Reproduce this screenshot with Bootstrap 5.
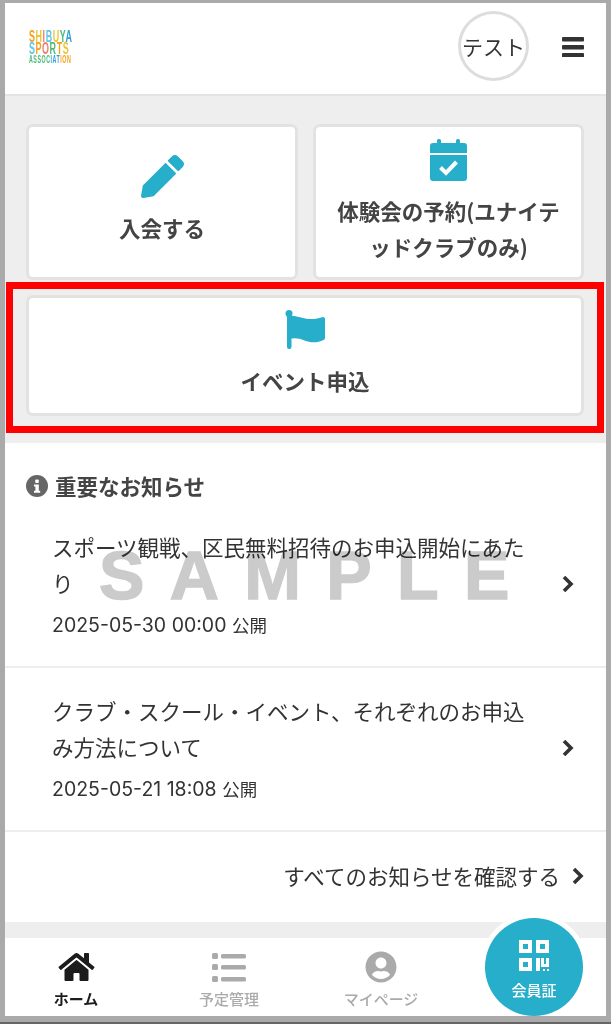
<!DOCTYPE html>
<html lang="ja">
    <head>
        <meta charset="UTF-8" />
        <title>Shibuya Sports Association</title>
        <link href="https://cdn.jsdelivr.net/npm/bootstrap@5.3.0/dist/css/bootstrap.min.css" rel="stylesheet" />
        <style>
            html, body {
                margin: 0;
                background: #aaa;
            }
            body {
                font-family: "Noto Sans CJK JP", "Noto Sans", sans-serif;
                color: #333;
                font-size: 21.5px;
                line-height: 36px;
            }
            .frame {
                height: 1024px;
                padding: 3px 5px 8px;
                border-bottom: 2px solid #666;
            }
            .screen {
                height: 1013px;
                background: #eee;
                position: relative;
                overflow: hidden;
            }
            /* header */
            .top-bar {
                height: 93px;
                background: #fff;
                border-bottom: 2px solid #e4e4e4;
                padding: 0 22px 0 24px;
            }
            .logo-mark {
                width: 43px;
                font: 700 16px/12.5px "Liberation Sans", sans-serif;
                letter-spacing: 1px;
                white-space: nowrap;
                margin-top: -3px;
            }
            .logo-mark > div {
                transform: scaleX(.56);
                transform-origin: left center;
            }
            .logo-mark .logo-small {
                font-size: 10px;
                line-height: 8px;
                transform: scaleX(.53);
            }
            .tone-o { color: #f5a01f; }
            .tone-b { color: #2f9fd8; }
            .tone-c { color: #62c6e8; }
            .tone-g { color: #4cbb78; }
            .tone-r { color: #ee7f6d; }
            .tone-y { color: #e9c63a; }
            .avatar {
                width: 71px;
                height: 70px;
                border: 3px solid #ddd;
                border-radius: 50%;
                margin-right: 33px;
                margin-top: -5px;
                white-space: nowrap;
                font-size: 21px;
            }
            .burger {
                width: 22px;
                height: 20px;
                margin-top: -4px;
            }
            /* menu tiles */
            .menu-area {
                padding: 28px 22px 27px 21px;
                gap: 15px;
                position: relative;
            }
            .tile {
                border: 3px solid #e2e2e2;
                border-radius: 7px;
                font-weight: 700;
                text-align: center;
                color: #444;
            }
            .tile-half {
                height: 156px;
                width: 272px;
                padding: 0 18px;
            }
            .tile-join {
                padding-bottom: 3px;
            }
            .tile-book {
                width: 271px;
            }
            .tile-wide {
                height: 121px;
                padding-bottom: 2px;
            }
            .tile svg {
                display: block;
                margin-bottom: 12px;
            }
            .tile-wide svg {
                margin-bottom: 14px;
            }
            .red-mark {
                position: absolute;
                left: 1px;
                right: 2px;
                top: 186px;
                height: 151px;
                border: 7px solid #f00;
                pointer-events: none;
            }
            /* notices */
            .notice-area {
                height: 479px;
                background: #fff;
                position: relative;
            }
            .notice-head {
                font-weight: 700;
                color: #444;
                padding: 25px 21px 0;
                gap: 7px;
            }
            .notice-area .list-group-flush > .notice-row {
                border: 0;
                border-bottom: 2px solid #eee;
                padding: 25px 32px 27px 47px;
                color: #333;
            }
            .notice-text {
                width: 480px;
            }
            .notice-date {
                font-family: Inter, "Noto Sans CJK JP", sans-serif;
                font-size: 19.5px;
                line-height: 28px;
                margin-top: 10px;
            }
            .date-tail {
                font-family: "Noto Sans CJK JP", sans-serif;
                font-size: 17.5px;
            }
            .notice-all {
                padding: 26px 22px 0 0;
                gap: 12px;
            }
            .watermark {
                position: absolute;
                left: 94px;
                top: 94px;
                font: 700 68px/76px "Liberation Sans", sans-serif;
                letter-spacing: 25.4px;
                color: #cbcbcb;
                -webkit-text-stroke: 1.5px #cbcbcb;
                mix-blend-mode: multiply;
                pointer-events: none;
                white-space: nowrap;
            }
            /* bottom nav */
            .foot-nav {
                position: absolute;
                left: 0;
                right: 0;
                bottom: 0;
                height: 78px;
                background: #fff;
                display: grid;
                grid-template-columns: 142px 164px 140px 1fr;
                font-size: 15px;
                line-height: 20px;
                font-weight: 500;
                color: #aaa;
                text-align: center;
            }
            .foot-item {
                padding-top: 13px;
            }
            .foot-item svg {
                display: block;
                margin: 0 auto 6px;
                height: 32px;
            }
            .foot-on {
                color: #1c1c1c;
                font-weight: 700;
            }
            .member-btn {
                position: absolute;
                right: 23px;
                bottom: 0;
                width: 98px;
                height: 98px;
                border-radius: 50%;
                background: #26aecb;
                box-shadow: 0 0 0 5px #fff;
                color: #fff;
                font-size: 15px;
                line-height: 20px;
                font-weight: 500;
                text-align: center;
                padding-top: 22px;
            }
            .member-btn svg {
                display: block;
                margin: 0 auto 7px;
            }
        </style>
    </head>
    <body>
        <div class="frame">
            <div class="screen">
                <!-- Header -->
                <div class="top-bar d-flex align-items-center">
                    <div class="logo-mark me-auto">
                        <div><span class="tone-o">S</span><span class="tone-y">H</span><span class="tone-r">I</span><span class="tone-c">B</span><span class="tone-y">U</span><span class="tone-g">Y</span><span class="tone-b">A</span></div>
                        <div><span class="tone-c">S</span><span class="tone-o">P</span><span class="tone-r">O</span><span class="tone-g">R</span><span class="tone-o">T</span><span class="tone-y">S</span></div>
                        <div class="logo-small"><span class="tone-g">ASSOC</span><span class="tone-b">IAT</span><span class="tone-o">ION</span></div>
                    </div>
                    <div class="avatar d-flex align-items-center justify-content-center">テスト</div>
                    <svg class="burger" viewBox="0 0 22 20" fill="#333">
                        <rect y="0" width="22" height="4.5" rx="1" />
                        <rect y="8" width="22" height="4.5" rx="1" />
                        <rect y="16" width="22" height="4.5" rx="1" />
                    </svg>
                </div>

                <!-- Menu tiles -->
                <div class="menu-area d-flex flex-column">
                    <div class="d-flex justify-content-between">
                        <a class="tile tile-half tile-join bg-white d-flex flex-column align-items-center justify-content-center text-decoration-none">
                            <svg width="43" height="43" viewBox="0 0 512 512" fill="#26aecb">
                                <path d="M497.9 142.1l-46.1 46.1c-4.7 4.7-12.3 4.7-17 0l-111-111c-4.7-4.7-4.7-12.3 0-17l46.1-46.1c18.7-18.7 49.1-18.7 67.9 0l60.1 60.1c18.8 18.7 18.8 49.1 0 67.9zM284.2 99.8L21.6 362.4.4 483.9c-2.9 16.4 11.4 30.6 27.8 27.8l121.5-21.3 262.6-262.6c4.7-4.7 4.7-12.3 0-17l-111-111c-4.8-4.7-12.4-4.7-17.1 0z" />
                            </svg>
                            入会する
                        </a>
                        <a class="tile tile-half tile-book bg-white d-flex flex-column align-items-center justify-content-center text-decoration-none">
                            <svg width="37" height="42" viewBox="0 0 37 42" fill="#26aecb">
                                <rect x="7" y="0" width="4" height="8" rx="1.5" />
                                <rect x="26" y="0" width="4" height="8" rx="1.5" />
                                <path d="M3 4h31a3 3 0 0 1 3 3v7H0V7a3 3 0 0 1 3-3z" />
                                <path d="M0 16h37v23a3 3 0 0 1-3 3H3a3 3 0 0 1-3-3z" />
                                <path d="M10.5 28.5l5.5 5.5 10.5-11" fill="none" stroke="#fff" stroke-width="4" />
                            </svg>
                            <span>体験会の予約(ユナイテッドクラブのみ)</span>
                        </a>
                    </div>
                    <a class="tile tile-wide bg-white d-flex flex-column align-items-center justify-content-center text-decoration-none">
                        <svg width="40" height="39" viewBox="0 0 40 39" fill="#26aecb">
                            <circle cx="4" cy="3.5" r="3.5" />
                            <rect x="2" y="4" width="4.5" height="35" rx="2" />
                            <path d="M3 6c6-1 10 1 17 2.500 7 1.500 13 0 18-1.500 1.500 0 2 1 2 2v19c0 1-.5 1.500-1.500 2-6 3-13 3-19 .5-6-2.500-11-3-16-1z" />
                        </svg>
                        イベント申込
                    </a>
                    <div class="red-mark"></div>
                </div>

                <!-- Notices -->
                <div class="notice-area">
                    <div class="notice-head d-flex align-items-center">
                        <svg width="22" height="22" viewBox="0 0 22 22">
                            <circle cx="11" cy="11" r="11" fill="#666" />
                            <rect x="9.200" y="4.500" width="3.600" height="3.400" rx="1" fill="#fff" />
                            <path d="M8 9.500h4.800v6.200H14.200v2H8v-2h1.400v-4.200H8z" fill="#fff" />
                        </svg>
                        重要なお知らせ
                    </div>
                    <div class="list-group list-group-flush">
                        <a class="list-group-item notice-row d-flex justify-content-between align-items-center">
                            <div class="notice-text">
                                <div>スポーツ観戦、区民無料招待のお申込開始にあたり</div>
                                <div class="notice-date">2025-05-30 00:00 <span class="date-tail">公開</span></div>
                            </div>
                            <svg width="12" height="18" viewBox="0 0 12 18" fill="none" stroke="#333" stroke-width="3.600">
                                <path d="M2 2l7 7-7 7" />
                            </svg>
                        </a>
                        <a class="list-group-item notice-row d-flex justify-content-between align-items-center">
                            <div class="notice-text">
                                <div>クラブ・スクール・イベント、それぞれのお申込み方法について</div>
                                <div class="notice-date">2025-05-21 18:08 <span class="date-tail">公開</span></div>
                            </div>
                            <svg width="12" height="18" viewBox="0 0 12 18" fill="none" stroke="#333" stroke-width="3.600">
                                <path d="M2 2l7 7-7 7" />
                            </svg>
                        </a>
                    </div>
                    <div class="notice-all d-flex justify-content-end align-items-center">
                        すべてのお知らせを確認する
                        <svg width="12" height="18" viewBox="0 0 12 18" fill="none" stroke="#333" stroke-width="3.600">
                            <path d="M2 2l7 7-7 7" />
                        </svg>
                    </div>
                    <div class="watermark">SAMPLE</div>
                </div>

                <!-- Bottom navigation -->
                <div class="foot-nav">
                    <div class="foot-item foot-on">
                        <svg width="37" viewBox="0 0 576 512" fill="#1c1c1c">
                            <path d="M280.37 148.26L96 300.11V464a16 16 0 0 0 16 16l112.06-.29a16 16 0 0 0 15.92-16V368a16 16 0 0 1 16-16h64a16 16 0 0 1 16 16v95.64a16 16 0 0 0 16 16.05L464 480a16 16 0 0 0 16-16V300L295.67 148.26a12.19 12.19 0 0 0-15.3 0zM571.6 251.47L488 182.56V44.05a12 12 0 0 0-12-12h-56a12 12 0 0 0-12 12v72.61L318.47 43a48 48 0 0 0-61 0L4.34 251.47a12 12 0 0 0-1.6 16.9l25.5 31A12 12 0 0 0 45.15 301l235.22-193.74a12.19 12.19 0 0 1 15.3 0L530.9 301a12 12 0 0 0 16.9-1.6l25.5-31a12 12 0 0 0-1.7-16.93z" />
                        </svg>
                        ホーム
                    </div>
                    <div class="foot-item">
                        <svg width="34" viewBox="0 0 34 32" fill="#aaa">
                            <rect x="0" y="2" width="6" height="6" rx="1.500" />
                            <rect x="0" y="13" width="6" height="6" rx="1.500" />
                            <rect x="0" y="25" width="6" height="6" rx="1.500" />
                            <rect x="9" y="3" width="25" height="4.500" rx="1.500" />
                            <rect x="9" y="14" width="25" height="4.500" rx="1.500" />
                            <rect x="9" y="26" width="25" height="4.500" rx="1.500" />
                        </svg>
                        予定管理
                    </div>
                    <div class="foot-item">
                        <svg width="32" viewBox="0 0 496 512" fill="#aaa">
                            <path d="M248 8C111 8 0 119 0 256s111 248 248 248 248-111 248-248S385 8 248 8zm0 96c48.6 0 88 39.4 88 88s-39.4 88-88 88-88-39.4-88-88 39.4-88 88-88zm0 344c-58.7 0-111.3-26.6-146.5-68.2 18.8-35.4 55.6-59.8 98.5-59.8 2.4 0 4.8.4 7.1 1.1 13 4.200 26.6 6.900 40.900 6.900 14.300 0 28-2.700 40.900-6.900 2.300-.7 4.700-1.100 7.100-1.100 42.900 0 79.700 24.400 98.500 59.800C359.300 421.400 306.700 448 248 448z" />
                        </svg>
                        マイページ
                    </div>
                    <div></div>
                </div>
                <a class="member-btn text-decoration-none">
                    <svg width="30" height="33" viewBox="0 0 30 33" fill="#fff">
                        <path fill-rule="evenodd" d="M0 0h13v13H0zM4 4v5h5V4z" />
                        <path fill-rule="evenodd" d="M17 0h13v13H17zM21 4v5h5V4z" />
                        <path fill-rule="evenodd" d="M0 18h13v13H0zM4 22v5h5v-5z" />
                        <path d="M17 18h4v13h-4zM22 18h3v6h2v-6h3v9h-8z" />
                        <rect x="24" y="29" width="2" height="2" />
                        <rect x="28" y="29" width="2" height="2" />
                    </svg>
                    会員証
                </a>
            </div>
        </div>
        <script src="https://cdn.jsdelivr.net/npm/bootstrap@5.3.0/dist/js/bootstrap.bundle.min.js"></script>
    </body>
</html>
